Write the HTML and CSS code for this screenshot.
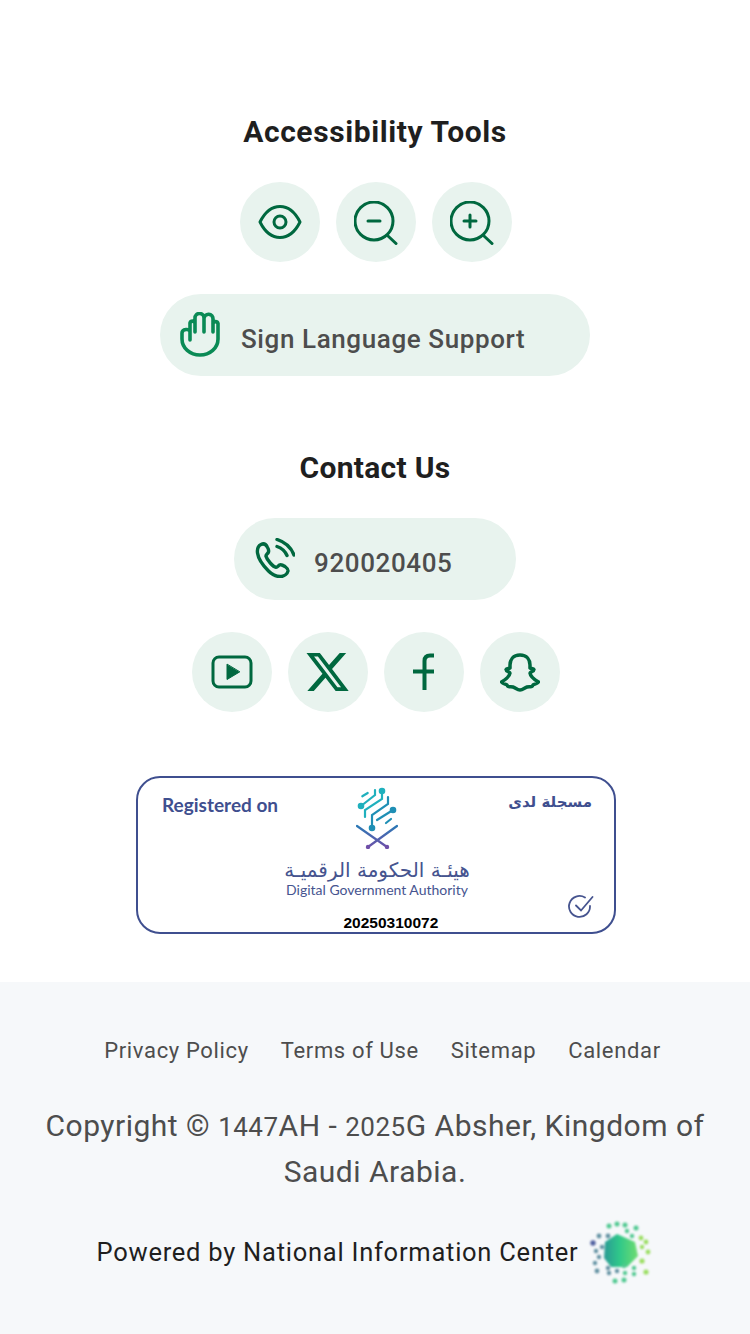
FILE: index.html
```html
<!DOCTYPE html>
<html lang="en">
<head>
<meta charset="utf-8">
<title>Absher</title>
<link rel="stylesheet" href="styles.css">
</head>
<body>
<main class="main">
  <h2 class="title">Accessibility Tools</h2>
  <div class="circles">
    <a class="circle"><svg class="ic" width="44" height="36" viewBox="0 0 44 36"><path d="M2 18C7 8 14 2.500 22 2.500S37 8 42 18C37 28 30 33.500 22 33.500S7 28 2 18Z"/><circle cx="22" cy="18" r="6"/></svg></a>
    <a class="circle"><svg class="ic shift" width="44" height="44" viewBox="0 0 44 44"><circle cx="20" cy="20" r="19"/><path d="M34 35l8 7.500M14 20h12"/></svg></a>
    <a class="circle"><svg class="ic shift" width="44" height="44" viewBox="0 0 44 44"><circle cx="20" cy="20" r="19"/><path d="M34 35l8 7.500M14 20h12M20 14v12"/></svg></a>
  </div>
  <a class="pill pill-sign">
    <svg class="hand" width="40" height="46" viewBox="0 0 40 46"><path d="M10 28V11a2.600 2.600 0 0 1 5 0v9M15 11V6a4.500 4.500 0 0 1 9 0v14M24 6.500a4.500 4.500 0 0 1 9 0.500v13M33 11.500a2.600 2.600 0 0 1 5 0V27c0 9-8 16-18 16S2 36 2 27v-6c0-4 8-5 8-1"/></svg>
    <span class="pill-text">Sign Language Support</span>
  </a>
  <h2 class="title title-contact">Contact Us</h2>
  <a class="pill pill-phone">
    <svg class="ic ic-phone" width="40" height="40" viewBox="0 0 40 40"><path d="M6 6.500C3 8 2 11 2.500 15c1 7 6 13 11 18 4 4 8 6 13 5.500 3-.5 6-3 6.500-5.500.3-2-1-3-3-4.500-2-1.300-4-2.300-5.500-1.500-1.300.7-2 2.500-3.500 2.300-3-.5-9-7.300-10-11-.4-1.700 1.500-2.500 2.300-3.800.8-1.500.2-3.500-1-5.500C11 6.500 9 5 6 6.500Z"/><path d="M22 8.500c4.500 1.500 8 4.500 10 9M22 1.500c8 2.500 14 8 17 15.500"/></svg>
    <span class="pill-text phone-text">920020405</span>
  </a>
  <div class="circles circles-social">
    <a class="circle"><svg class="ic" width="42" height="34" viewBox="0 0 42 34"><rect x="2" y="2" width="38" height="30" rx="6"/><path class="solid" d="M16 9.500v15l12.500-7.500Z"/></svg></a>
    <a class="circle"><svg class="x-logo" width="44" height="42" viewBox="1 2 22.500 20"><path fill-rule="evenodd" d="M18.244 2.250h3.308l-7.227 8.260 8.502 11.240H16.170l-5.214-6.817L4.990 21.750H1.680l7.730-8.835L1.254 2.250H8.080l4.713 6.231zm-1.161 17.520h1.833L7.084 4.126H5.117z"/></svg></a>
    <a class="circle"><svg class="ic ic-f" width="24" height="38" viewBox="0 0 24 38"><path d="M22 2.500h-4c-3.500 0-5.500 2-5.500 5.500V37M1 18.500h21"/></svg></a>
    <a class="circle"><svg class="ic ic-snap" width="40" height="39" viewBox="0 0 40 39"><path d="M20 2C13 2 10 7 10 12v3c-1 1-3.500 0-4 1.500 0 2 4 2 4 3.500-.5 4-5 7-8.500 9 1.500 2 4 2 5.500 3 1 3 3 1 6 2 3 1 4 3 7 3s4-2 7-3c3-1 5 1 6-2 1.500-1 4-1 5.500-3-3.500-2-8-5-8.500-9 0-1.500 4-1.500 4-3.500-.5-1.500-3-.5-4-1.500v-3C30 7 27 2 20 2Z"/></svg></a>
  </div>
  <section class="badge">
    <div class="badge-row">
      <span class="reg-en">Registered on</span>
      <div class="dga">
        <svg class="dga-mark" width="42" height="62" viewBox="11 5 42 62">
          <defs><linearGradient id="xg" gradientUnits="userSpaceOnUse" x1="0" y1="44" x2="0" y2="66"><stop offset="0" stop-color="#2a78b5"/><stop offset="1" stop-color="#6f4fa8"/></linearGradient></defs>
          <g class="dga-teal"><path d="M17.300 14.300l5.400-3.300M16 24l14-11V8M20 35v-7l17-11V9"/><circle cx="16" cy="24" r="2.200"/><circle cx="37" cy="9" r="2.200"/></g>
          <g class="dga-blue"><path d="M27 46V33l16-11v-7M32 38l16-10M41 41l5-4"/><circle cx="27" cy="46" r="2.200"/><circle cx="48" cy="28" r="2.200"/></g>
          <g class="dga-cross"><path d="M12 44l30 21M52 44L23 65"/><circle cx="42" cy="65" r="2.200"/><circle cx="23" cy="65" r="2.200"/></g>
        </svg>
        <span class="dga-ar" lang="ar" dir="rtl">هيئـة الحكومة الرقميـة</span>
        <span class="dga-en">Digital Government Authority</span>
      </div>
      <span class="reg-ar" lang="ar" dir="rtl">مسجلة لدى</span>
    </div>
    <span class="reg-no">20250310072</span>
    <svg class="check" width="26" height="26" viewBox="0 0 26 26"><path d="M22 12a10.500 10.500 0 1 1-5-8.500M8 11.500l5 5L24.500 3"/></svg>
  </section>
</main>
<footer class="footer">
  <nav class="links">
    <a>Privacy Policy</a><a>Terms of Use</a><a>Sitemap</a><a>Calendar</a>
  </nav>
  <p class="copy">Copyright © <span class="num">1447</span>AH - <span class="num">2025</span>G Absher, Kingdom of<br>Saudi Arabia.</p>
  <div class="powered">
    <span>Powered by National Information Center</span>
    <svg class="nic" width="64" height="64" viewBox="0 0 64 64">
      <defs><linearGradient id="nicg" x1="0" y1="0" x2="1" y2="0"><stop offset="0" stop-color="#2a9a94"/><stop offset=".45" stop-color="#2fc88a"/><stop offset="1" stop-color="#6fdc70"/></linearGradient></defs>
      <path fill="url(#nicg)" d="M28 14l18 8 3 14-11 11H22l-7-9 1-16Z"/>
      <g fill="#5f8fa0"><circle cx="10" cy="16" r="2.400"/><circle cx="19" cy="16" r="2.400"/><circle cx="13" cy="27" r="2.200"/><circle cx="7" cy="31" r="2.200"/><circle cx="10" cy="37" r="2.200"/><circle cx="6" cy="43" r="2.200"/><circle cx="8" cy="51" r="2.400"/><circle cx="19" cy="48" r="2.200"/><circle cx="20" cy="53" r="2.200"/><circle cx="28" cy="51" r="2.200"/></g>
      <circle cx="4" cy="23" r="2.700" fill="#4f5f9f"/>
      <g fill="#50c890"><circle cx="20" cy="6" r="2.500"/><circle cx="28" cy="4" r="2.500"/><circle cx="36" cy="5" r="2.500"/><circle cx="47" cy="8" r="2.500"/><circle cx="38" cy="11" r="2.200"/><circle cx="43" cy="16" r="2.200"/><circle cx="35" cy="46" r="2.200"/><circle cx="36" cy="53" r="2.200"/><circle cx="45" cy="48" r="2.200"/><circle cx="45" cy="54" r="2.200"/><circle cx="26" cy="61" r="2.500"/><circle cx="35" cy="60" r="2.500"/></g>
      <g fill="#9ade60"><circle cx="52" cy="18" r="2.400"/><circle cx="57" cy="22" r="2.400"/><circle cx="53" cy="27" r="2.200"/><circle cx="59" cy="32" r="2.400"/><circle cx="53" cy="41" r="2.600"/><circle cx="57" cy="52" r="2.600"/></g>
    </svg>
  </div>
</footer>
</body>
</html>
```
FILE: styles.css
```css
* { box-sizing: border-box; }
html, body { margin: 0; padding: 0; }
body { width: 750px; height: 1334px; overflow: hidden; background: #fff; font-family: Roboto, "Noto Sans", sans-serif; color: #4d4d4d; }
.main { display: flex; flex-direction: column; align-items: center; padding-top: 112px; height: 982px; }
.title { margin: 0 0 30px; font-size: 30px; line-height: 40px; font-weight: 700; color: #1f1f1f; letter-spacing: 0.6px; }
.title-contact { margin-top: 72px; letter-spacing: 0.3px; }
.circles { display: flex; gap: 16px; margin-left: 2px; }
.circles-social { margin-top: 32px; }
.circle { width: 80px; height: 80px; border-radius: 50%; background: #e8f3ee; display: flex; align-items: center; justify-content: center; }
.ic { fill: none; stroke: #00683f; stroke-width: 3; stroke-linecap: round; stroke-linejoin: round; }
.ic .solid { fill: #00683f; stroke-width: 1; }
.x-logo { fill: #00683f; }
.ic-f { stroke-width: 4; stroke-linecap: butt; }
.ic-snap { stroke-width: 3.500; }
.ic-phone { stroke-width: 3.400; margin-top: -2px; }
.shift { margin: 2px -1px 0 -1px; }
.pill { display: flex; align-items: center; border-radius: 41px; background: #e8f3ee; height: 82px; }
.pill-sign { width: 430px; margin-top: 32px; padding-left: 20px; gap: 21px; }
.pill-phone { width: 282px; padding-left: 21px; gap: 19px; }
.pill-text { font-size: 26px; font-weight: 500; color: #4d4d4d; margin-top: 8px; letter-spacing: 0.6px; }
.pill-text.phone-text { letter-spacing: 0.6px; }
.hand { fill: none; stroke: #0a8a55; stroke-width: 3.600; stroke-linecap: round; stroke-linejoin: round; }
.badge { position: relative; margin: 64px 0 0 2px; width: 480px; height: 158px; border: 2.500px solid #3f4f8f; border-radius: 24px; }
.badge-row { display: grid; grid-template-columns: 1fr auto 1fr; padding: 9px 22px 0 24px; color: #3f4f8f; }
.reg-en { font-family: Lato, sans-serif; font-size: 19px; font-weight: 700; margin-top: 6px; }
.reg-ar { font-family: "DejaVu Sans", sans-serif; font-size: 15px; font-weight: 700; margin-top: 6px; text-align: right; justify-self: end; }
.dga { display: flex; flex-direction: column; align-items: center; color: #46548f; }
.dga-ar { font-family: "DejaVu Sans", sans-serif; font-size: 20px; line-height: 24px; margin-top: 9px; }
.dga-en { font-family: Lato, sans-serif; font-size: 14px; line-height: 16px; }
.dga-mark { fill: none; stroke-width: 2.200; stroke-linecap: round; }
.dga-teal { stroke: #1fb0bd; } .dga-teal circle { fill: #1fb0bd; }
.dga-blue { stroke: #1f8fb5; } .dga-blue circle { fill: #1f8fb5; }
.dga-cross { stroke: url(#xg); } .dga-cross circle { fill: #6f4fa8; stroke: none; }
.reg-no { position: absolute; left: 205.500px; top: 136px; font-family: "Liberation Sans", Arial, sans-serif; font-size: 15.500px; font-weight: 700; line-height: 18px; color: #000; }
.check { position: absolute; right: 20px; bottom: 12px; fill: none; stroke: #46548f; stroke-width: 1.800; stroke-linecap: round; }
.footer { height: 352px; background: #f6f8fa; display: flex; flex-direction: column; align-items: center; padding-top: 53px; }
.links { display: flex; gap: 32px; margin-left: 15px; font-size: 22px; line-height: 32px; color: #4d4d4d; letter-spacing: 0.65px; }
.copy { margin: 36px 0 0; width: 690px; text-align: center; font-size: 30px; line-height: 46px; color: #4d4d4d; letter-spacing: 0.5px; }
.num { font-size: 26px; line-height: 1; }
.powered { display: flex; align-items: center; gap: 11px; margin-top: 25px; font-size: 25.500px; color: #1f1f1f; letter-spacing: 0.75px; }
.nic { filter: blur(1px); }
```
